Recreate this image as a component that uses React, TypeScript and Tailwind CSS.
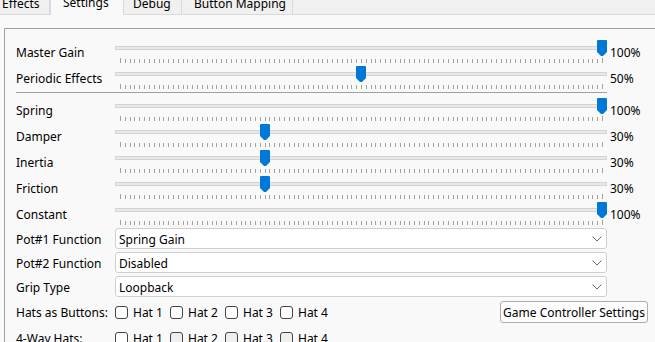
import React from 'react'

const tabs = [
  { name: 'Effects', cls: '-ml-[10px] w-[60px] pl-[12px]' },
  { name: 'Settings', cls: 'w-[74px] pl-[12px]' },
  { name: 'Debug', cls: 'w-[58px] pl-[9px]' },
  { name: 'Button Mapping', cls: 'w-[111px] pl-[12px]' },
]

function Ticks() {
  const ticks = []
  for (let i = 0; i <= 100; i++) {
    const x = Math.round(5 + i * 4.82)
    const tall = i === 0 || i === 100
    ticks.push(<rect key={i} x={x} y={tall ? 0 : 1} width={1} height={tall ? 5 : 4} fill="#a3a39b" />)
  }
  return (
    <svg className="mt-[8px] block" width={492} height={5}>
      {ticks}
    </svg>
  )
}

function Slider({ label, value }: { label: string; value: number }) {
  return (
    <div className="flex h-[26px] items-center">
      <div className="w-[99px] pt-[2px]">{label}</div>
      <div className="relative h-[26px] w-[492px]">
        <div className="mt-[7px] h-[4px] border border-[#d4d4d4] bg-[#e8e8e8]" />
        <Ticks />
        {/* handle */}
        <svg
          className="absolute top-[1px]"
          style={{ left: Math.round(value * 4.82) }}
          width={10}
          height={16}
          viewBox="0 0 10 16"
        >
          <path d="M0 1 Q0 0 1 0 H9 Q10 0 10 1 V12 L6 16 H4 L0 12 Z" fill="#0078d7" />
        </svg>
      </div>
      <div className="pl-[3px] pt-[2px]">{value}%</div>
    </div>
  )
}

function Combo({ label, value }: { label: string; value: string }) {
  return (
    <div className="flex h-[21px] items-center">
      <div className="w-[99px] pt-[2px]">{label}</div>
      <div className="flex h-[21px] w-[492px] items-center justify-between rounded-[3px] border border-[#cfcfcf] bg-white pl-[3px] pr-[4px]">
        <span className="pt-[2px]">{value}</span>
        <svg width={10} height={6} viewBox="0 0 10 6">
          <path d="M0.5 0.5 L5 5 L9.5 0.5" fill="none" stroke="#6a6a6a" strokeWidth={1} />
        </svg>
      </div>
    </div>
  )
}

function HatChecks({ shaded }: { shaded?: boolean }) {
  return (
    <>
      {[1, 2, 3, 4].map((n) => (
        <div key={n} className="flex w-[55px] items-center gap-[5px]">
          <span
            className={
              'h-[13px] w-[13px] rounded-[3px] border border-[#444] ' +
              (shaded && n > 1 ? 'bg-[#efefef]' : 'bg-white')
            }
          />
          <span className="pt-[2px]">Hat {n}</span>
        </div>
      ))}
    </>
  )
}

export default function App() {
  return (
    <div className="h-[342px] w-[655px] overflow-hidden bg-[#f9f9f9] font-['Noto_Sans',sans-serif] text-[12px] leading-[16px] text-black">
      {/* Tab strip */}
      <div className="-mt-[8px] flex h-[23px] border-b border-[#dadada] bg-[#f0f0f0]">
        {tabs.map((t) => {
          const selected = t.name === 'Settings'
          return (
            <div
              key={t.name}
              className={
                t.cls +
                (selected
                  ? ' relative z-10 -mb-px h-[23px] border-x border-[#dadada] bg-[#f9f9f9] pt-[3px]'
                  : ' h-[22px] border-r border-[#dadada] pt-[4px]')
              }
            >
              {t.name}
            </div>
          )
        })}
      </div>

      {/* Group box */}
      <div className="ml-[4px] mt-[13px] h-[400px] w-[700px] border-l border-t border-[#a0a0a0] pl-[11px] pt-[10px]">
        <div className="w-[632px]">
          <Slider label="Master Gain" value={100} />
          <Slider label="Periodic Effects" value={50} />

          <div className="mb-[4px] mt-[1px] h-px w-[591px] bg-[#a0a0a0]" />

          <Slider label="Spring" value={100} />
          <Slider label="Damper" value={30} />
          <Slider label="Inertia" value={30} />
          <Slider label="Friction" value={30} />
          <Slider label="Constant" value={100} />

          <div className="mt-[1px] flex flex-col gap-[3px]">
            <Combo label="Pot#1 Function" value="Spring Gain" />
            <Combo label="Pot#2 Function" value="Disabled" />
            <Combo label="Grip Type" value="Loopback" />
          </div>

          <div className="mt-[4px] flex h-[22px] items-center">
            <div className="w-[99px] pt-[2px]">Hats as Buttons:</div>
            <HatChecks />
            <button className="ml-auto h-[22px] w-[148px] rounded-[3px] border border-[#adadad] bg-[#fdfdfd] pt-[1px] text-center">
              Game Controller Settings
            </button>
          </div>

          <div className="mt-[4px] flex h-[22px] items-center">
            <div className="w-[99px] pt-[2px]">4-Way Hats:</div>
            <HatChecks shaded />
          </div>
        </div>
      </div>
    </div>
  )
}
